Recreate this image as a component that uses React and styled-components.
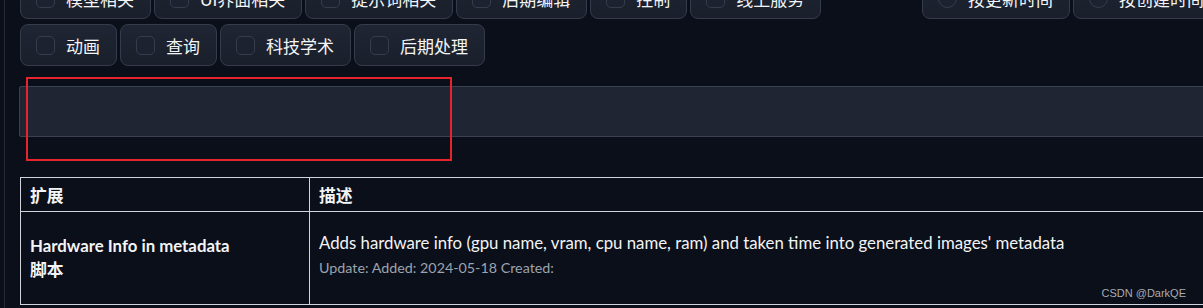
import React from "react";
import styled, { createGlobalStyle } from "styled-components";

const GlobalStyle = createGlobalStyle`
  html, body {
    margin: 0;
    padding: 0;
    background: #0b0f19;
    overflow: hidden;
  }
  body {
    font-family: "Lato", "Noto Sans CJK SC", sans-serif;
    color: #f3f4f6;
  }
`;

const Page = styled.div`
  position: relative;
  width: 1203px;
  height: 308px;
  overflow: hidden;
  padding-left: 4px;
  box-sizing: border-box;
`;

const Panel = styled.div`
  width: 1260px;
  height: 340px;
  border-left: 1px solid #222a38;
  padding-left: 15px;
  box-sizing: border-box;
  margin-top: -23px;
`;

const FilterRow = styled.div`
  display: flex;
  align-items: flex-start;
  gap: 12px;
`;

const Group = styled.div`
  display: flex;
  flex-wrap: wrap;
  gap: 5px 3px;
  width: ${(p) => p.$width}px;
`;

const Chip = styled.label`
  display: flex;
  align-items: center;
  gap: 11px;
  height: 42px;
  padding: 0 16px 0 15px;
  box-sizing: border-box;
  border: 1px solid #343c4b;
  border-radius: 8px;
  background: linear-gradient(180deg, #1f2533 0%, #1a1f2b 100%);
  font-family: "Lato", "Noto Sans CJK SC", sans-serif;
  font-size: 17px;
  color: #f3f4f6;
  white-space: nowrap;
`;

const Box = styled.span`
  width: 19px;
  height: 19px;
  box-sizing: border-box;
  border: 1px solid #353d4c;
  border-radius: ${(p) => (p.$round ? "50%" : "5px")};
  background: #1c2230;
  flex: none;
`;

const InputBox = styled.div`
  margin-top: 20px;
  margin-left: -1px;
  height: 51px;
  box-sizing: border-box;
  border: 1px solid #3a4252;
  border-radius: 2px;
  background: #1f2533;
`;

const Table = styled.table`
  margin-top: 40px;
  border-collapse: collapse;
  width: 1240px;
  font-family: "Lato", "Noto Sans CJK SC", sans-serif;
  font-size: 16.8px;
  color: #f3f4f6;
`;

const Th = styled.th`
  border: 1px solid #d1d5db;
  height: 34px;
  padding: 0 9px;
  text-align: left;
  font-weight: 700;
  width: ${(p) => (p.$w ? `${p.$w}px` : "auto")};
  box-sizing: border-box;
`;

const Td = styled.td`
  border: 1px solid #d1d5db;
  height: 93px;
  padding: 0 9px;
  vertical-align: middle;
  box-sizing: border-box;
  line-height: 24px;
`;

const Name = styled.div`
  font-weight: 700;
`;

const Desc = styled.div`
  padding-bottom: 2px;
`;

const Meta = styled.div`
  font-size: 14.3px;
  color: #9ca3af;
  line-height: 22px;
  margin-bottom: 7px;
`;

const Annotation = styled.div`
  position: absolute;
  left: 26px;
  top: 77px;
  width: 426px;
  height: 84px;
  border: 2px solid #e5242c;
  box-sizing: border-box;
`;

const Watermark = styled.div`
  position: absolute;
  right: 17px;
  bottom: 9px;
  font-family: "Liberation Sans", Arial, sans-serif;
  font-size: 11px;
  color: #a9abb0;
`;

const checkRows = ["模型相关", "UI界面相关", "提示词相关", "后期编辑", "控制", "线上服务", "动画", "查询", "科技学术", "后期处理"];
const sorts = ["按更新时间", "按创建时间"];

export default function App() {
  return (
    <Page>
      <GlobalStyle />
      <Panel>
        <FilterRow>
          <Group $width={890}>
            {checkRows.map((t) => (
              <Chip key={t}>
                <Box />
                {t}
              </Chip>
            ))}
          </Group>
          <Group $width={320}>
            {sorts.map((t) => (
              <Chip key={t}>
                <Box $round />
                {t}
              </Chip>
            ))}
          </Group>
        </FilterRow>
        <InputBox />
        <Table>
          <thead>
            <tr>
              <Th $w={289}>扩展</Th>
              <Th>描述</Th>
            </tr>
          </thead>
          <tbody>
            <tr>
              <Td>
                <Name>Hardware Info in metadata</Name>
                <Name>脚本</Name>
              </Td>
              <Td>
                <Desc>Adds hardware info (gpu name, vram, cpu name, ram) and taken time into generated images' metadata</Desc>
                <Meta>Update: Added: 2024-05-18 Created:</Meta>
              </Td>
            </tr>
          </tbody>
        </Table>
      </Panel>
      <Annotation />
      <Watermark>CSDN @DarkQE</Watermark>
    </Page>
  );
}
